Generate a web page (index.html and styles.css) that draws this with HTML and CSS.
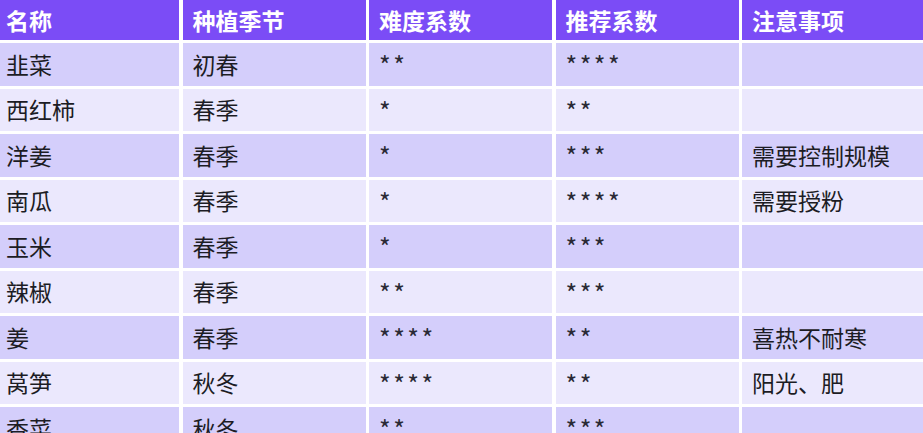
FILE: index.html
```html
<!DOCTYPE html>
<html lang="zh">
<head>
<meta charset="utf-8">
<link rel="stylesheet" href="styles.css">
</head>
<body>
<div class="table">
  <div class="row head">
    <div class="cell">名称</div><div class="cell">种植季节</div><div class="cell">难度系数</div><div class="cell">推荐系数</div><div class="cell">注意事项</div>
  </div>
  <div class="row odd">
    <div class="cell">韭菜</div><div class="cell">初春</div><div class="cell stars">**</div><div class="cell stars">****</div><div class="cell"></div>
  </div>
  <div class="row even">
    <div class="cell">西红柿</div><div class="cell">春季</div><div class="cell stars">*</div><div class="cell stars">**</div><div class="cell"></div>
  </div>
  <div class="row odd">
    <div class="cell">洋姜</div><div class="cell">春季</div><div class="cell stars">*</div><div class="cell stars">***</div><div class="cell">需要控制规模</div>
  </div>
  <div class="row even">
    <div class="cell">南瓜</div><div class="cell">春季</div><div class="cell stars">*</div><div class="cell stars">****</div><div class="cell">需要授粉</div>
  </div>
  <div class="row odd">
    <div class="cell">玉米</div><div class="cell">春季</div><div class="cell stars">*</div><div class="cell stars">***</div><div class="cell"></div>
  </div>
  <div class="row even">
    <div class="cell">辣椒</div><div class="cell">春季</div><div class="cell stars">**</div><div class="cell stars">***</div><div class="cell"></div>
  </div>
  <div class="row odd">
    <div class="cell">姜</div><div class="cell">春季</div><div class="cell stars">****</div><div class="cell stars">**</div><div class="cell">喜热不耐寒</div>
  </div>
  <div class="row even">
    <div class="cell">莴笋</div><div class="cell">秋冬</div><div class="cell stars">****</div><div class="cell stars">**</div><div class="cell">阳光、肥</div>
  </div>
  <div class="row odd">
    <div class="cell">香菜</div><div class="cell">秋冬</div><div class="cell stars">**</div><div class="cell stars">***</div><div class="cell"></div>
  </div>
</div>
</body>
</html>
```
FILE: styles.css
```css
html, body {
  margin: 0;
  padding: 0;
  background: #ffffff;
  overflow: hidden;
}
body {
  font-family: "Noto Sans CJK SC", "Noto Sans", sans-serif;
  font-size: 23px;
  color: #1c1c24;
}
.table {
  display: grid;
  grid-template-columns: repeat(5, 183px);
  grid-template-rows: 40px;
  grid-auto-rows: 42.5px;
  column-gap: 3.5px;
  row-gap: 3px;
  margin-left: -4px;
}
.row {
  display: contents;
}
.cell {
  display: flex;
  align-items: center;
  padding: 0 10px;
  line-height: 1;
  white-space: nowrap;
  overflow: hidden;
}
.head .cell {
  background: #7b4cf6;
  color: #ffffff;
  font-weight: 700;
}
.odd .cell {
  background: #d4cefb;
}
.even .cell {
  background: #ebe8fd;
}
.stars {
  color: #2a2a35;
  font-size: 25px;
  letter-spacing: 2.5px;
  padding-top: 1px;
}
```
